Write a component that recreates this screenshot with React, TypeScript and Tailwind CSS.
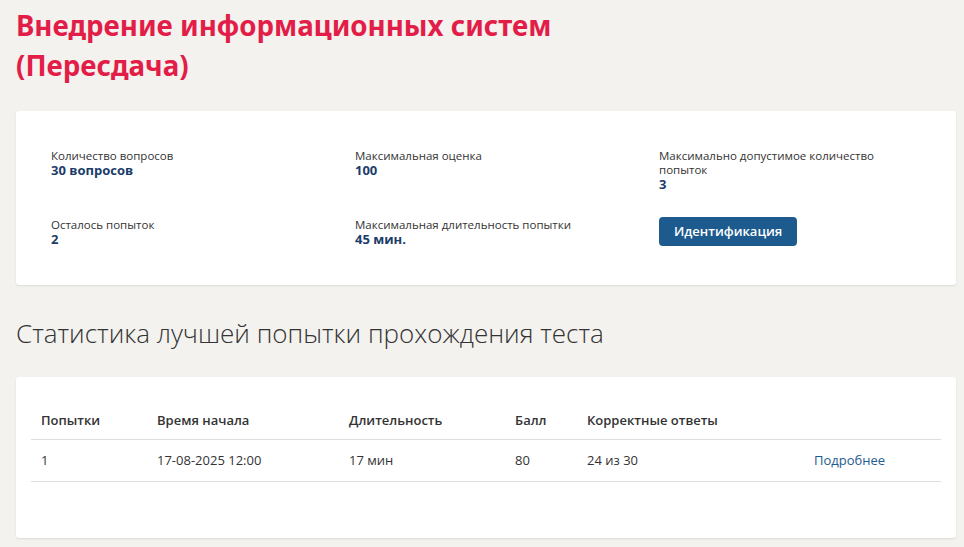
const stats = [
  { label: 'Количество вопросов', value: '30 вопросов' },
  { label: 'Максимальная оценка', value: '100' },
  { label: 'Максимально допустимое количество попыток', value: '3' },
  { label: 'Осталось попыток', value: '2' },
  { label: 'Максимальная длительность попытки', value: '45 мин.' },
];

const rows = [
  { attempt: '1', start: '17-08-2025 12:00', duration: '17 мин', score: '80', correct: '24 из 30' },
];

function Stat({ label, value }: { label: string; value: string }) {
  return (
    <div className="max-w-[235px]">
      <div className="text-[11.5px] leading-[14px] text-[#333]">{label}</div>
      <div className="text-[13px] leading-[14px] font-bold text-[#1b3d69]">{value}</div>
    </div>
  );
}

export default function App() {
  return (
    <div className="min-h-[547px] bg-[#f3f2ef] pl-4 pr-2 pt-[5px] pb-4 font-['Open_Sans','Noto_Sans',sans-serif]">
      <h1 className="text-[27.7px] leading-[40px] font-bold text-[#e21d48] w-[560px] font-['Noto_Sans','Open_Sans',sans-serif]">
        Внедрение информационных систем (Пересдача)
      </h1>

      <div className="mt-[26px] bg-white rounded-[3px] shadow-[0_1px_2px_rgba(0,0,0,0.1)] pl-[35px] pr-4 pt-[38px] pb-[39px]">
        <div className="grid grid-cols-[304px_304px_1fr] gap-y-[27px]">
          {stats.slice(0, 3).map((s) => (
            <Stat key={s.label} {...s} />
          ))}
          {stats.slice(3).map((s) => (
            <Stat key={s.label} {...s} />
          ))}
          <div>
            <button className="h-[29px] px-[15px] -mt-px rounded-[4px] bg-[#1d5a8e] text-white text-[13px] font-semibold">
              Идентификация
            </button>
          </div>
        </div>
      </div>

      <h2 className="mt-[31px] text-[26px] leading-[34px] font-light text-[#333]">
        Статистика лучшей попытки прохождения теста
      </h2>

      <div className="mt-[27px] bg-white rounded-[3px] shadow-[0_1px_2px_rgba(0,0,0,0.1)] px-[15px] pt-[26px] pb-[56px]">
        <table className="w-full table-fixed border-collapse text-[13px] text-[#333]">
          <colgroup>
            <col className="w-[116px]" />
            <col className="w-[192px]" />
            <col className="w-[166px]" />
            <col className="w-[72px]" />
            <col className="w-[227px]" />
            <col />
          </colgroup>
          <thead>
            <tr className="border-b border-[#dedede]">
              <th className="pl-[10px] h-[36px] text-left font-semibold">Попытки</th>
              <th className="pl-[10px] text-left font-semibold">Время начала</th>
              <th className="pl-[10px] text-left font-semibold">Длительность</th>
              <th className="pl-[10px] text-left font-semibold">Балл</th>
              <th className="pl-[10px] text-left font-semibold">Корректные ответы</th>
              <th />
            </tr>
          </thead>
          <tbody>
            {rows.map((r) => (
              <tr key={r.attempt} className="border-b border-[#dedede]">
                <td className="pl-[10px] h-[42px]">{r.attempt}</td>
                <td className="pl-[10px]">{r.start}</td>
                <td className="pl-[10px]">{r.duration}</td>
                <td className="pl-[10px]">{r.score}</td>
                <td className="pl-[10px]">{r.correct}</td>
                <td className="pl-[10px]">
                  <a href="#" className="text-[#1d5a8e]">Подробнее</a>
                </td>
              </tr>
            ))}
          </tbody>
        </table>
      </div>
    </div>
  );
}
